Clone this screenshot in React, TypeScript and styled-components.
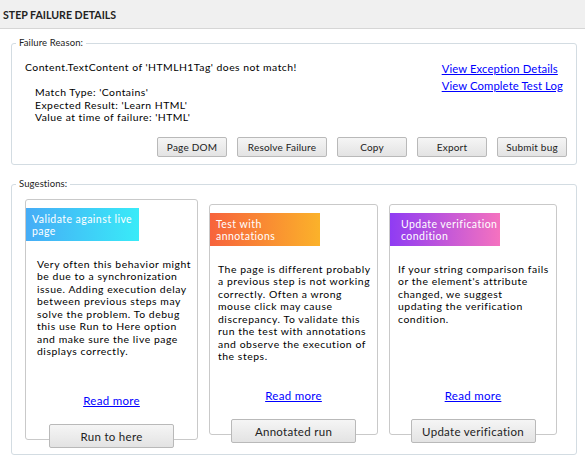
import React from "react";
import styled, { createGlobalStyle } from "styled-components";

const GlobalStyle = createGlobalStyle`
  html, body { margin: 0; padding: 0; background: #fff; }
  body {
    font-family: Lato, "Open Sans", sans-serif;
    color: #000;
    width: 585px;
    height: 462px;
    overflow: hidden;
  }
  * { box-sizing: border-box; }
`;

const Page = styled.div`
  width: 585px;
  height: 462px;
  display: flex;
  flex-direction: column;
`;

const Header = styled.div`
  height: 29px;
  border-bottom: 1px solid #d6d6d6;
  background: #f0f0f0;
  display: flex;
  align-items: center;
  padding: 1px 0 0 3px;
  font-size: 10.6px;
  font-weight: 700;
  color: #222;
`;

const Group = styled.fieldset<{ $mt: number }>`
  margin: ${(p) => p.$mt}px 8px 0 11px;
  padding: 0;
  border: 1px solid #d3dce2;
  border-radius: 3px;
  min-inline-size: 0;
`;

const Legend = styled.legend`
  margin-left: 4px;
  padding: 0 3px;
  font-size: 9.5px;
  line-height: 14px;
  letter-spacing: 0.1px;
  color: #222;
`;

const FailBody = styled.div`
  padding: 11px 9px 7px 13px;
  display: flex;
  flex-direction: column;
`;

const TopRow = styled.div`
  display: flex;
  justify-content: space-between;
  align-items: flex-start;
  padding-right: 4px;
`;

const Message = styled.div`
  font-size: 10.4px;
  line-height: 12.5px;
  letter-spacing: 0.47px;
`;

const Details = styled.div`
  margin-top: 12.5px;
  padding-left: 10px;
`;

const Links = styled.div`
  display: flex;
  flex-direction: column;
  font-size: 11.3px;
  line-height: 16.7px;
  letter-spacing: 0.1px;
`;

const Link = styled.a`
  color: #0000ff;
  text-decoration: underline;
  cursor: pointer;
`;

const ButtonRow = styled.div`
  display: flex;
  justify-content: flex-end;
  gap: 10px;
  margin-top: 13.5px;
`;

const SmallButton = styled.button<{ $w: number }>`
  width: ${(p) => p.$w}px;
  height: 20px;
  padding: 0;
  font-family: inherit;
  font-size: 10px;
  letter-spacing: 0.2px;
  color: #222;
  border: 1px solid #b9b9b9;
  border-radius: 2px;
  background: linear-gradient(#f5f5f5, #e3e3e3);
`;

const CardsRow = styled.div`
  display: flex;
  align-items: center;
  gap: 11px;
  padding: 8px 0 14px 13px;
`;

const Card = styled.div<{ $w: number; $h: number; $pl: number }>`
  width: ${(p) => p.$w}px;
  height: ${(p) => p.$h}px;
  border: 1px solid #c9c9c9;
  border-radius: 3px;
  background: #fff;
  display: flex;
  flex-direction: column;
  --pl: ${(p) => p.$pl}px;
`;

const Banner = styled.div<{ $from: string; $to: string; $pl: number }>`
  margin-top: 8px;
  width: 66%;
  padding: 4.5px 4px 3px ${(p) => p.$pl}px;
  background: linear-gradient(90deg, ${(p) => p.$from}, ${(p) => p.$to});
  color: #fff;
  font-size: 10.5px;
  line-height: 12.7px;
  letter-spacing: 0.45px;
  white-space: nowrap;
`;

const Body = styled.div`
  margin-top: 17px;
  padding: 0 2px 0 var(--pl);
  font-size: 10.4px;
  line-height: 12.5px;
  letter-spacing: 0.55px;
  white-space: nowrap;
`;

const ReadMore = styled(Link)`
  margin-top: auto;
  margin-bottom: 16px;
  align-self: center;
  font-size: 11.5px;
  line-height: 14px;
  letter-spacing: 0.3px;
`;

const CardButton = styled.button`
  align-self: center;
  width: 125px;
  height: 24px;
  margin-bottom: -9px;
  padding: 0;
  font-family: inherit;
  font-size: 11.5px;
  letter-spacing: 0.3px;
  color: #222;
  border: 1px solid #b9b9b9;
  border-radius: 2px;
  background: linear-gradient(#f5f5f5, #e3e3e3);
`;

const Lines: React.FC<{ lines: string[] }> = ({ lines }) => (
  <>
    {lines.map((l, i) => (
      <React.Fragment key={i}>
        {l}
        {i < lines.length - 1 && <br />}
      </React.Fragment>
    ))}
  </>
);

const cards = [
  {
    w: 173,
    h: 241,
    pl: 11,
    bpl: 6,
    from: "#46acf6",
    to: "#39ebf8",
    title: ["Validate against live", "page"],
    body: [
      "Very often this behavior might",
      "be due to a synchronization",
      "issue. Adding execution delay",
      "between previous steps may",
      "solve the problem. To debug",
      "this use Run to Here option",
      "and make sure the live page",
      "displays correctly.",
    ],
    action: "Run to here",
  },
  {
    w: 169,
    h: 231,
    pl: 8,
    bpl: 6,
    from: "#f7633c",
    to: "#fbb22a",
    title: ["Test with", "annotations"],
    body: [
      "The page is different probably",
      "a previous step is not working",
      "correctly. Often a wrong",
      "mouse click may cause",
      "discrepancy. To validate this",
      "run the test with annotations",
      "and observe the execution of",
      "the steps.",
    ],
    action: "Annotated run",
  },
  {
    w: 168,
    h: 231,
    pl: 8,
    bpl: 11,
    from: "#8f3cf3",
    to: "#f572bf",
    title: ["Update verification", "condition"],
    body: [
      "If your string comparison fails",
      "or the element's attribute",
      "changed, we suggest",
      "updating the verification",
      "condition.",
    ],
    action: "Update verification",
  },
];

export default function App() {
  return (
    <Page>
      <GlobalStyle />
      <Header>STEP FAILURE DETAILS</Header>
      <Group $mt={7}>
        <Legend>Failure Reason:</Legend>
        <FailBody>
          <TopRow>
            <Message>
              Content.TextContent of 'HTMLH1Tag' does not match!
              <Details>
                Match Type: 'Contains'
                <br />
                Expected Result: 'Learn HTML'
                <br />
                Value at time of failure: 'HTML'
              </Details>
            </Message>
            <Links>
              <Link>View Exception Details</Link>
              <Link>View Complete Test Log</Link>
            </Links>
          </TopRow>
          <ButtonRow>
            <SmallButton $w={70}>Page DOM</SmallButton>
            <SmallButton $w={90}>Resolve Failure</SmallButton>
            <SmallButton $w={70}>Copy</SmallButton>
            <SmallButton $w={70}>Export</SmallButton>
            <SmallButton $w={70}>Submit bug</SmallButton>
          </ButtonRow>
        </FailBody>
      </Group>
      <Group $mt={12}>
        <Legend>Sugestions:</Legend>
        <CardsRow>
          {cards.map((c) => (
            <Card key={c.action} $w={c.w} $h={c.h} $pl={c.pl}>
              <Banner $from={c.from} $to={c.to} $pl={c.bpl}>
                <Lines lines={c.title} />
              </Banner>
              <Body>
                <Lines lines={c.body} />
              </Body>
              <ReadMore>Read more</ReadMore>
              <CardButton>{c.action}</CardButton>
            </Card>
          ))}
        </CardsRow>
      </Group>
    </Page>
  );
}
